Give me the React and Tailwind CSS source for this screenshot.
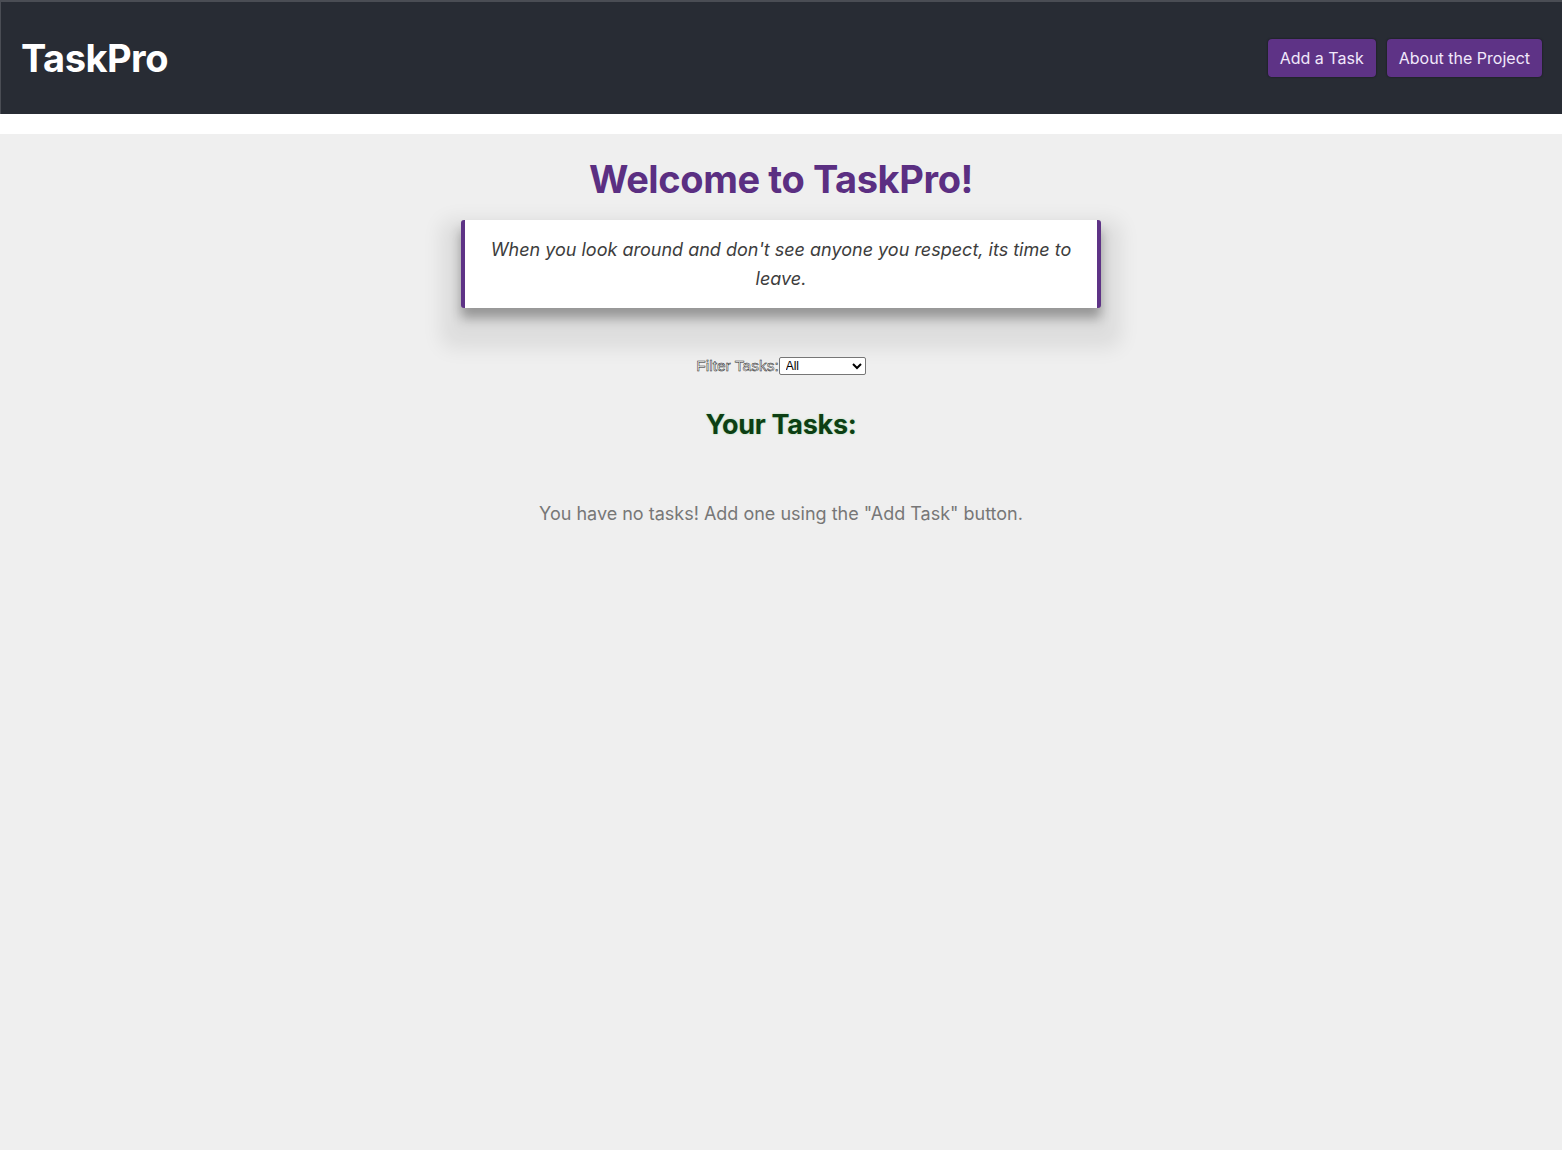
import { useState } from 'react'

export default function App() {
  const [filter, setFilter] = useState('all')

  return (
    <div className="min-h-[1150px] bg-[#efefef] font-['Inter',sans-serif]">
      <header className="h-[114px] bg-[#282c34] border-t-2 border-l border-[#4a4d54] flex items-center justify-between pl-5 pr-5">
        <h1 className="text-[38px] font-bold text-white tracking-[-0.5px]">TaskPro</h1>
        <nav className="flex gap-[11px]">
          <button className="h-[38px] px-[12px] bg-[#5e3386] text-[#f1e8fb] text-[16px] rounded-[4px] shadow-[0_0_2px_rgba(0,0,0,0.6)]">
            Add a Task
          </button>
          <button className="h-[38px] px-[12px] bg-[#5e3386] text-[#f1e8fb] text-[16px] rounded-[4px] shadow-[0_0_2px_rgba(0,0,0,0.6)]">
            About the Project
          </button>
        </nav>
      </header>
      <div className="h-5 bg-white" />

      <main className="flex flex-col items-center">
        <h2 className="mt-[22px] text-[38px] leading-[46px] font-bold text-[#5b2f82] tracking-[-0.4px]">
          Welcome to TaskPro!
        </h2>

        <div className="mt-[18px] w-[640px] h-[88px] bg-white border-x-4 border-[#5e3386] rounded-[3px] flex items-center justify-center px-6 shadow-[0_10px_12px_rgba(0,0,0,0.32),0_20px_20px_20px_rgba(0,0,0,0.08)]">
          <p className="text-center italic text-[18px] leading-[29px] text-[#3d3d3d]">
            When you look around and don't see anyone you respect, its time to leave.
          </p>
        </div>

        <div className="mt-[49px] flex items-center">
          <label className="font-['Liberation_Sans',sans-serif] text-[15.5px] leading-[18px] text-white [-webkit-text-stroke:0.5px_#222]">
            Filter Tasks:
          </label>
          <select
            value={filter}
            onChange={e => setFilter(e.target.value)}
            className="w-[87px] h-[18px] text-[12px] leading-[14px] font-['Liberation_Sans',sans-serif] bg-white border border-[#767676] rounded-[2px] px-[2px] text-black"
          >
            <option value="all">All</option>
            <option value="done">Completed</option>
            <option value="todo">Incomplete</option>
          </select>
        </div>

        <h3 className="mt-[33px] text-[27px] leading-[34px] font-bold text-[#0d3f14] tracking-[-0.3px] [text-shadow:0_0_2px_rgba(90,200,90,0.5)]">
          Your Tasks:
        </h3>

        <p className="mt-[58px] text-[18px] text-[#777]">
          You have no tasks! Add one using the "Add Task" button.
        </p>
      </main>
    </div>
  )
}
